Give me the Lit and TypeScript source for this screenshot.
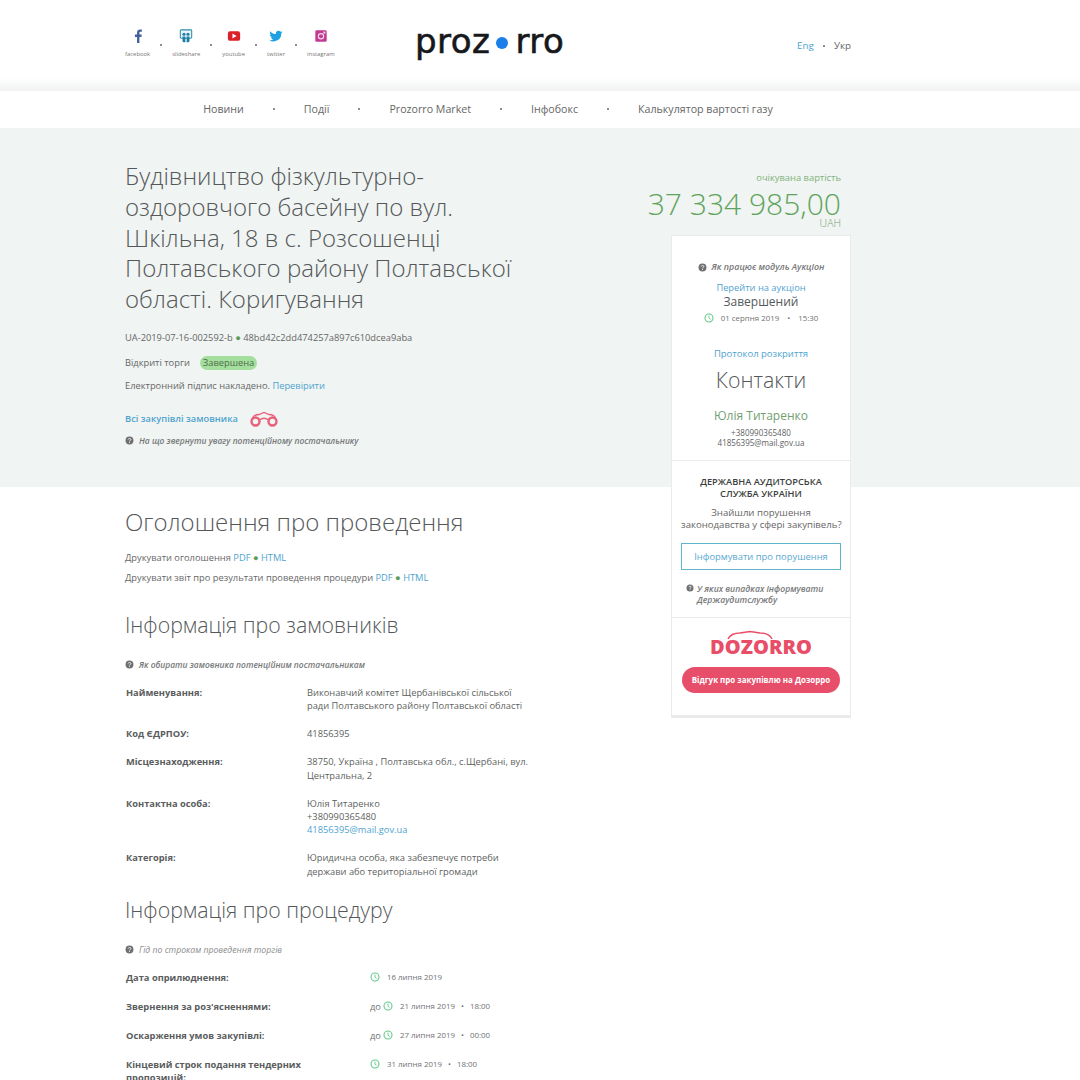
import { LitElement, html, css } from "lit";
import { customElement } from "lit/decorators.js";

const clock = html`<svg class="clock" viewBox="0 0 12 12"><circle cx="6" cy="6" r="4.8" fill="none" stroke="#62c98a" stroke-width="1.3"/><path d="M6 3.2V6.2L7.9 7.6" fill="none" stroke="#62c98a" stroke-width="1.1"/></svg>`;
const help = html`<svg class="help" viewBox="0 0 10 10"><circle cx="5" cy="5" r="4.4" fill="#6d6f70"/><path d="M3.6 3.9C3.7 2.4 6.500 2.400 6.500 3.900C6.500 5 5 4.900 5 6" fill="none" stroke="#fff" stroke-width="1"/><rect x="4.500" y="6.600" width="1" height="1" fill="#fff"/></svg>`;
const bino = html`<svg class="bino" viewBox="0 0 28 16" fill="none" stroke="#e8617a"><circle cx="5.500" cy="10.500" r="4" stroke-width="2.400"/><circle cx="22.500" cy="10.500" r="4" stroke-width="2.400"/><path d="M2.500 7Q4 3.500 9 3.500L14 1.500L19 3.500Q24 3.500 25.500 7M9.500 9Q14 5.500 18.500 9" stroke-width="1.300"/></svg>`;

const socials = [
  ["facebook", html`<svg viewBox="0 0 16 16"><path d="M9.600 16V9h2.300l.4-2.800H9.600V4.500c0-.8.300-1.300 1.400-1.300h1.400V.7C12.100.7 11.300.6 10.400.6 8.300.6 6.900 1.900 6.900 4.200v2H4.500V9h2.400v7z" fill="#44609c"/></svg>`],
  ["slideshare", html`<svg viewBox="0 0 16 16"><rect x="1.500" y="1" width="13" height="9.500" rx="1" fill="#eaf4f7" stroke="#2d8fa8" stroke-width="1.200"/><circle cx="5.700" cy="6" r="1.800" fill="#1f7fa8"/><circle cx="10.300" cy="6" r="1.800" fill="#1f7fa8"/><path d="M4 8.500h3.300V15H5.200C4.500 15 4 14 4 13zM8.700 8.500H12V13c0 1-.5 2-1.200 2H8.700z" fill="#1f7fa8"/></svg>`],
  ["youtube", html`<svg viewBox="0 0 16 16"><rect x="1" y="2.500" width="14" height="11" rx="2.500" fill="#dc2027"/><path d="M6.200 5.200L11 8L6.200 10.800z" fill="#fff"/></svg>`],
  ["twitter", html`<svg viewBox="0 0 16 16"><path d="M15.500 3.400c-.6.300-1.200.4-1.800.5.600-.4 1.100-1 1.400-1.700-.6.400-1.300.6-2 .8a3.100 3.100 0 0 0-5.300 2.800C5.200 5.700 2.900 4.400 1.400 2.500c-.8 1.400-.4 3.200 1 4.100-.5 0-1-.2-1.400-.4 0 1.500 1.100 2.800 2.500 3.100-.5.100-.9.100-1.400 0 .4 1.200 1.500 2.100 2.900 2.100A6.200 6.200 0 0 1 .5 12.800a8.800 8.800 0 0 0 13.500-7.800c.6-.4 1.100-1 1.500-1.600z" fill="#1da1e2"/></svg>`],
  ["instagram", html`<svg viewBox="0 0 16 16"><rect x="1.500" y="1.500" width="13" height="13" rx="1.500" fill="#c23a92"/><circle cx="8" cy="8.300" r="3" fill="none" stroke="#f4dcec" stroke-width="1.300"/><rect x="10.800" y="3" width="2.200" height="2.200" fill="#f4dcec"/></svg>`],
] as const;

const nav = ["Новини", "Події", "Prozorro Market", "Інфобокс", "Калькулятор вартості газу"];

@customElement("app-root")
export class AppRoot extends LitElement {
  static styles = css`
    :host { display: block; height: 1080px; overflow: hidden; background: #fff; font-family: "Open Sans", sans-serif; color: #5d5f60; position: relative; font-size: 10px; }
    a { color: #4fa3cf; text-decoration: none; }
    .header { height: 78px; padding: 0 229px 0 125px; display: flex; align-items: flex-start; box-sizing: border-box; }
    .socials { display: flex; width: 290px; padding-top: 29px; gap: 10px; }
    .soc { display: flex; flex-direction: column; align-items: center; color: #777; font-size: 5.900px; line-height: 10px; gap: 6px; }
    .soc svg { width: 14px; height: 14px; }
    .soc-dot { width: 2px; height: 2px; border-radius: 50%; background: #666; margin-top: 15px; }
    .logo { flex: 1; font-family: "DejaVu Sans", "Open Sans", sans-serif; font-size: 34px; line-height: 40px; color: #16181c; padding-top: 21px; display: flex; align-items: center; letter-spacing: .5px; -webkit-text-stroke: .6px #16181c; }
    .logo i { width: 12px; height: 12px; border-radius: 50%; background: #1a7fe8; margin: 3px 7px 0 6px; }
    .lang { font-size: 9.800px; color: #666; padding-top: 39px; display: flex; align-items: center; gap: 9px; line-height: 13px; }
    .lang i { width: 2px; height: 2px; border-radius: 50%; background: #666; }
    .fade { height: 13px; background: linear-gradient(#fff, #f1f2f2); }
    .nav { height: 37px; display: flex; justify-content: center; align-items: center; font-size: 10.650px; color: #666; padding: 0 104px 2px 0; box-sizing: border-box; gap: 29px; }
    .nav b { width: 2px; height: 2px; border-radius: 50%; background: #666; }
    .band { position: absolute; left: 0; right: 0; top: 128px; height: 359px; background: #f0f4f2; }
    .page { position: relative; display: grid; grid-template-columns: 426px 180px; column-gap: 120px; padding-left: 125px; }
    .left { padding-top: 33px; }
    h1 { margin: 0; font-weight: 300; font-size: 24px; line-height: 30.750px; color: #55585a; width: 395px; }
    .meta { font-size: 9.300px; line-height: 14px; margin: 0; color: #666; }
    .ids { margin-top: 16px; }
    .ids i { font-style: normal; color: #5c9c5a; }
    .kind { margin-top: 11px; display: flex; align-items: center; }
    .tag { background: #a5df9e; border-radius: 7px; height: 14px; line-height: 14px; padding: 0 3px; margin-left: 10px; color: #4d6d4b; }
    .sign { margin-top: 9px; }
    .all { margin-top: 17px; display: flex; align-items: center; font-weight: 600; height: 18px; }
    .bino { width: 28px; height: 16px; margin-left: 12px; }
    .tip { font-style: italic; font-weight: 600; font-size: 8.450px; color: #77797a; display: flex; align-items: center; gap: 5px; line-height: 14px; }
    .help { width: 9px; height: 9px; flex: none; }
    .band-tip { margin-top: 6px; }
    h2 { margin: 0; font-weight: 300; font-size: 24px; line-height: 30px; color: #55585a; }
    .ann { margin-top: 59px; }
    h3 { margin: 0; font-weight: 300; font-size: 21.300px; line-height: 28px; color: #55585a; }
    .prints { margin-top: 14px; display: grid; gap: 6px; }
    .prints i { font-style: normal; color: #5c9c5a; }
    .s1 { margin-top: 26px; }
    .s1 .tip { margin-top: 19px; }
    .s2 .tip { font-weight: 400; font-size: 8.700px; color: #8a8c8d; margin-top: 19px; }
    .row { display: grid; font-size: 9.300px; line-height: 13.200px; margin-top: 15px; }
    .r1 { grid-template-columns: 182px 232px; }
    .row .k { font-weight: 700; color: #5a5c5d; padding-left: 1px; }
    .s1 .rows { margin-top: 14px; }
    .s1 .row:first-child { margin-top: 0; }
    .s2 { margin-top: 18px; }
    .s2 .rows { margin-top: 14px; }
    .r2 { grid-template-columns: 245px 1fr; margin-top: 15.800px; }
    .s2 .row:first-child { margin-top: 0; }
    .when { display: flex; align-items: center; font-size: 7.900px; color: #707273; white-space: nowrap; }
    .when u { text-decoration: none; width: 13px; font-size: 9.300px; }
    .r2 .when { align-self: start; height: 13px; }
    .clock { width: 10px; height: 10px; margin-right: 7px; flex: none; }
    .when .dot { margin: 0 6px; }

    .right { padding-top: 40px; text-align: center; }
    .price { text-align: right; padding-right: 10px; }
    .price .l { font-size: 9.350px; line-height: 19px; color: #7fb27a; }
    .price .v { font-size: 30px; line-height: 33px; font-weight: 300; margin-left: -60px; white-space: nowrap; color: #5fa45d; }
    .price .c { font-size: 10.500px; line-height: 12px; font-weight: 300; color: #7a9d79; margin-top: -3px; }
    .card { background: #fff; border: 1px solid #e9ecea; border-bottom-width: 3px; box-sizing: border-box; height: 483px; margin-top: 6px; display: flex; flex-direction: column; }
    .c1 { height: 225px; flex: none; box-sizing: border-box; padding-top: 24px; border-bottom: 1px solid #e9ecea; }
    .c1 .tip { justify-content: center; font-size: 8.900px; }
    .link { font-size: 9.300px; line-height: 14px; }
    .c1 .link1 { margin-top: 7px; }
    .done { font-size: 12px; line-height: 14px; color: #55585a; }
    .c1 .when { justify-content: center; margin-top: 2px; height: 14px; }
    .c1 .when .dot { margin: 0 8px; }
    .link2 { margin-top: 22px; font-size: 9.500px; }
    .contacts { font-weight: 300; font-size: 21.300px; line-height: 28px; color: #55585a; margin-top: 5px; }
    .person { font-size: 12px; line-height: 16px; color: #72a070; margin-top: 14px; }
    .small { font-size: 8.050px; line-height: 10px; margin-top: 4px; color: #606263; }
    .c2 { height: 157px; flex: none; box-sizing: border-box; padding: 15px 9px 0; border-bottom: 1px solid #e9ecea; }
    .c2 h4 { margin: 0; font-size: 9.250px; line-height: 12px; font-weight: 600; color: #3d3f40; }
    .c2 p { margin: 7px 0 0; font-size: 9.600px; line-height: 12px; color: #666; white-space: nowrap; }
    .btn { border: 1px solid #62b4cc; height: 27px; box-sizing: border-box; line-height: 25px; margin-top: 12px; font-size: 9.370px; color: #5aa8d2; }
    .c2 .tip { margin: 14px 0 0 5px; align-items: flex-start; text-align: left; font-size: 8.650px; line-height: 11px; gap: 3px; }
    .c2 .tip .help { width: 8px; height: 8px; }
    .c3 { padding: 12px 10px 0; }
    .doz { display: flex; justify-content: center; height: 28px; align-items: flex-end; font-weight: 800; color: #e84e67; font-size: 20px; line-height: 22px; position: relative; }
    .arch { position: absolute; left: calc(50% - 35px); top: 0; width: 48px; height: 10px; }
    .pill { margin-top: 9px; background: #e64e69; color: #fff; height: 26px; line-height: 26px; border-radius: 13px; font-size: 7.960px; font-weight: 700; }
  `;

  render() {
    return html`
      <div class="header">
        <div class="socials">
          ${socials.map(([n, i], k) => html`
            <div class="soc">${i}<span>${n}</span></div>
            ${k < 4 ? html`<div class="soc-dot"></div>` : ""}
          `)}
        </div>
        <div class="logo">proz<i></i>rro</div>
        <div class="lang"><a>Eng</a><i></i><span>Укр</span></div>
      </div>
      <div class="fade"></div>
      <div class="nav">
        ${nav.map((n, k) => html`<span>${n}</span>${k < 4 ? html`<b></b>` : ""}`)}
      </div>
      <div class="band"></div>
      <div class="page">
        <div class="left">
          <h1>Будівництво фізкультурно-оздоровчого басейну по вул. Шкільна, 18 в с. Розсошенці Полтавського району Полтавської області. Коригування</h1>
          <p class="meta ids">UA-2019-07-16-002592-b <i>●</i> 48bd42c2dd474257a897c610dcea9aba</p>
          <p class="meta kind">Відкриті торги <span class="tag">Завершена</span></p>
          <p class="meta sign">Електронний підпис накладено. <a>Перевірити</a></p>
          <p class="meta all"><a>Всі закупівлі замовника</a>${bino}</p>
          <div class="tip band-tip">${help}<span>На що звернути увагу потенційному постачальнику</span></div>

          <h2 class="ann">Оголошення про проведення</h2>
          <div class="meta prints">
            <div>Друкувати оголошення <a>PDF</a> <i>●</i> <a>HTML</a></div>
            <div>Друкувати звіт про результати проведення процедури <a>PDF</a> <i>●</i> <a>HTML</a></div>
          </div>

          <section class="s1">
            <h3>Інформація про замовників</h3>
            <div class="tip">${help}<span>Як обирати замовника потенційним постачальникам</span></div>
            <div class="rows">
              <div class="row r1"><span class="k">Найменування:</span><span>Виконавчий комітет Щербанівської сільської<br/>ради Полтавського району Полтавської області</span></div>
              <div class="row r1"><span class="k">Код ЄДРПОУ:</span><span>41856395</span></div>
              <div class="row r1"><span class="k">Місцезнаходження:</span><span>38750, Україна , Полтавська обл., с.Щербані, вул.<br/>Центральна, 2</span></div>
              <div class="row r1"><span class="k">Контактна особа:</span><span>Юлія Титаренко<br/>+380990365480<br/><a>41856395@mail.gov.ua</a></span></div>
              <div class="row r1"><span class="k">Категорія:</span><span>Юридична особа, яка забезпечує потреби<br/>держави або територіальної громади</span></div>
            </div>
          </section>

          <section class="s2">
            <h3>Інформація про процедуру</h3>
            <div class="tip">${help}<span>Гід по строкам проведення торгів</span></div>
            <div class="rows">
              <div class="row r2"><span class="k">Дата оприлюднення:</span><span class="when">${clock}<span>16 липня 2019</span></span></div>
              <div class="row r2"><span class="k">Звернення за роз'ясненнями:</span><span class="when"><u>до</u>${clock}<span>21 липня 2019</span><span class="dot">•</span><span>18:00</span></span></div>
              <div class="row r2"><span class="k">Оскарження умов закупівлі:</span><span class="when"><u>до</u>${clock}<span>27 липня 2019</span><span class="dot">•</span><span>00:00</span></span></div>
              <div class="row r2"><span class="k">Кінцевий строк подання тендерних<br/>пропозицій:</span><span class="when">${clock}<span>31 липня 2019</span><span class="dot">•</span><span>18:00</span></span></div>
            </div>
          </section>
        </div>

        <aside class="right">
          <div class="price">
            <div class="l">очікувана вартість</div>
            <div class="v">37 334 985,00</div>
            <div class="c">UAH</div>
          </div>
          <div class="card">
            <div class="c1">
              <div class="tip">${help}<span>Як працює модуль Аукціон</span></div>
              <div class="link link1"><a>Перейти на аукціон</a></div>
              <div class="done">Завершений</div>
              <div class="when">${clock}<span>01 серпня 2019</span><span class="dot">•</span><span>15:30</span></div>
              <div class="link link2"><a>Протокол розкриття</a></div>
              <div class="contacts">Контакти</div>
              <div class="person">Юлія Титаренко</div>
              <div class="small">+380990365480<br/>41856395@mail.gov.ua</div>
            </div>
            <div class="c2">
              <h4>ДЕРЖАВНА АУДИТОРСЬКА<br/>СЛУЖБА УКРАЇНИ</h4>
              <p>Знайшли порушення<br/>законодавства у сфері закупівель?</p>
              <div class="btn">Інформувати про порушення</div>
              <div class="tip">${help}<span>У яких випадках інформувати<br/>Держаудитслужбу</span></div>
            </div>
            <div class="c3">
              <div class="doz">DOZORRO<svg class="arch" viewBox="0 0 48 10" fill="none" stroke="#e84e67" stroke-width="1.500"><path d="M2 9Q5 3 14 3L24 1.500L34 3Q43 3 46 9"/></svg></div>
              <div class="pill">Відгук про закупівлю на Дозорро</div>
            </div>
          </div>
        </aside>
      </div>
    `;
  }
}
